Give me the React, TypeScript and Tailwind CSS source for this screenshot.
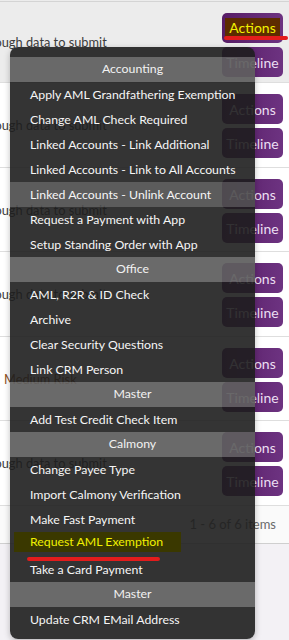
import React from "react";

const font = { fontFamily: 'Lato, "Open Sans", sans-serif' };

type Row = { text: string; risk?: boolean; h: string; bg: string };

const rows: Row[] = [
  { text: "Not enough data to submit", h: "h-[81px]", bg: "bg-[#ececec]" },
  { text: "Not enough data to submit", h: "h-[85px]", bg: "bg-white" },
  { text: "Not enough data to submit", h: "h-[84px]", bg: "bg-white" },
  { text: "Not enough data to submit", h: "h-[85px]", bg: "bg-white" },
  { text: "Medium Risk", risk: true, h: "h-[84px]", bg: "bg-white" },
  { text: "Not enough data to submit", h: "h-[85px]", bg: "bg-white" },
];

type MenuEntry = { label: string; header?: boolean; hover?: boolean; mark?: boolean };

const menu: MenuEntry[] = [
  { label: "Accounting", header: true },
  { label: "Apply AML Grandfathering Exemption" },
  { label: "Change AML Check Required" },
  { label: "Linked Accounts - Link Additional" },
  { label: "Linked Accounts - Link to All Accounts" },
  { label: "Linked Accounts - Unlink Account", hover: true },
  { label: "Request a Payment with App" },
  { label: "Setup Standing Order with App" },
  { label: "Office", header: true },
  { label: "AML, R2R & ID Check" },
  { label: "Archive" },
  { label: "Clear Security Questions" },
  { label: "Link CRM Person" },
  { label: "Master", header: true },
  { label: "Add Test Credit Check Item" },
  { label: "Calmony", header: true },
  { label: "Change Payee Type" },
  { label: "Import Calmony Verification" },
  { label: "Make Fast Payment" },
  { label: "Request AML Exemption", mark: true },
  { label: "Take a Card Payment" },
  { label: "Master", header: true },
  { label: "Update CRM EMail Address" },
];

function Btn({ label, marked }: { label: string; marked?: boolean }) {
  return (
    <div className="relative w-[61px] h-[30px] rounded-[5px] bg-gradient-to-r from-[#571c66] to-[#6d3381] flex items-center justify-center text-[14px] text-[#ecdff2]">
      {marked ? (
        <span className="bg-[#5c2c00] text-[#f2f200] px-[4px] h-[20px] leading-[20px]">{label}</span>
      ) : (
        <span>{label}</span>
      )}
      {marked && (
        <div className="absolute left-[2px] top-[23px] w-[64px] h-[4px] rounded-full bg-[#e21c1c]" />
      )}
    </div>
  );
}

export default function App() {
  return (
    <div className="relative w-[289px] h-[640px] overflow-hidden bg-[#f3f1f5]" style={font}>
      <div className="h-[1px] bg-[#ececec]" />
      <div className="border-t border-[#d4d4d4]">
        {rows.map((r, i) => (
          <div
            key={i}
            className={`flex ${r.h} ${r.bg} border-b border-[#dedede] box-border`}
          >
            <div className="flex-1 flex items-center overflow-hidden pt-[2px]">
              {r.risk ? (
                <span className="ml-[4px] whitespace-nowrap text-[12.8px] text-[#8c4f22]">{r.text}</span>
              ) : (
                <span className="ml-[-44px] whitespace-nowrap text-[12.8px] text-[#3c3c3c]">{r.text}</span>
              )}
            </div>
            <div className="w-[67px] pt-[11px] flex flex-col gap-[4px]">
              <Btn label="Actions" marked={i === 0} />
              <Btn label="Timeline" />
            </div>
          </div>
        ))}
      </div>
      <div className="h-[38px] bg-[#fafafa] border-b border-[#cfcfcf] flex items-center justify-end pr-[13px] text-[13px] text-[#6a6a6a]">
        1 - 6 of 6 items
      </div>

      <div className="absolute left-[10px] top-[47px] w-[245px] h-[592px] rounded-[8px] bg-[rgba(30,30,30,0.9)] pt-[10px] shadow-[0_2px_6px_rgba(0,0,0,0.25)]">
        {menu.map((m, i) =>
          m.header ? (
            <div
              key={i}
              className="h-[25px] bg-[rgba(255,255,255,0.27)] flex items-center justify-center text-[12.3px] text-[#f2f2f2]"
            >
              {m.label}
            </div>
          ) : (
            <div
              key={i}
              className={`relative h-[25px] flex items-center pl-[20px] pt-[1px] text-[12.3px] whitespace-nowrap ${
                m.hover ? "bg-[rgba(255,255,255,0.2)]" : ""
              } ${m.mark ? "text-[#f0f000]" : "text-[#f6f6f6]"}`}
            >
              {m.mark && (
                <>
                  <div className="absolute left-[4px] top-0 w-[167px] h-[20px] bg-[#3a3800]" />
                  <div className="absolute left-[17px] top-[25px] w-[133px] h-[4px] rounded-full bg-[#e21c1c] z-10" />
                </>
              )}
              <span className={`relative ${m.mark ? "-mt-[5px]" : ""}`}>{m.label}</span>
            </div>
          )
        )}
      </div>
    </div>
  );
}
